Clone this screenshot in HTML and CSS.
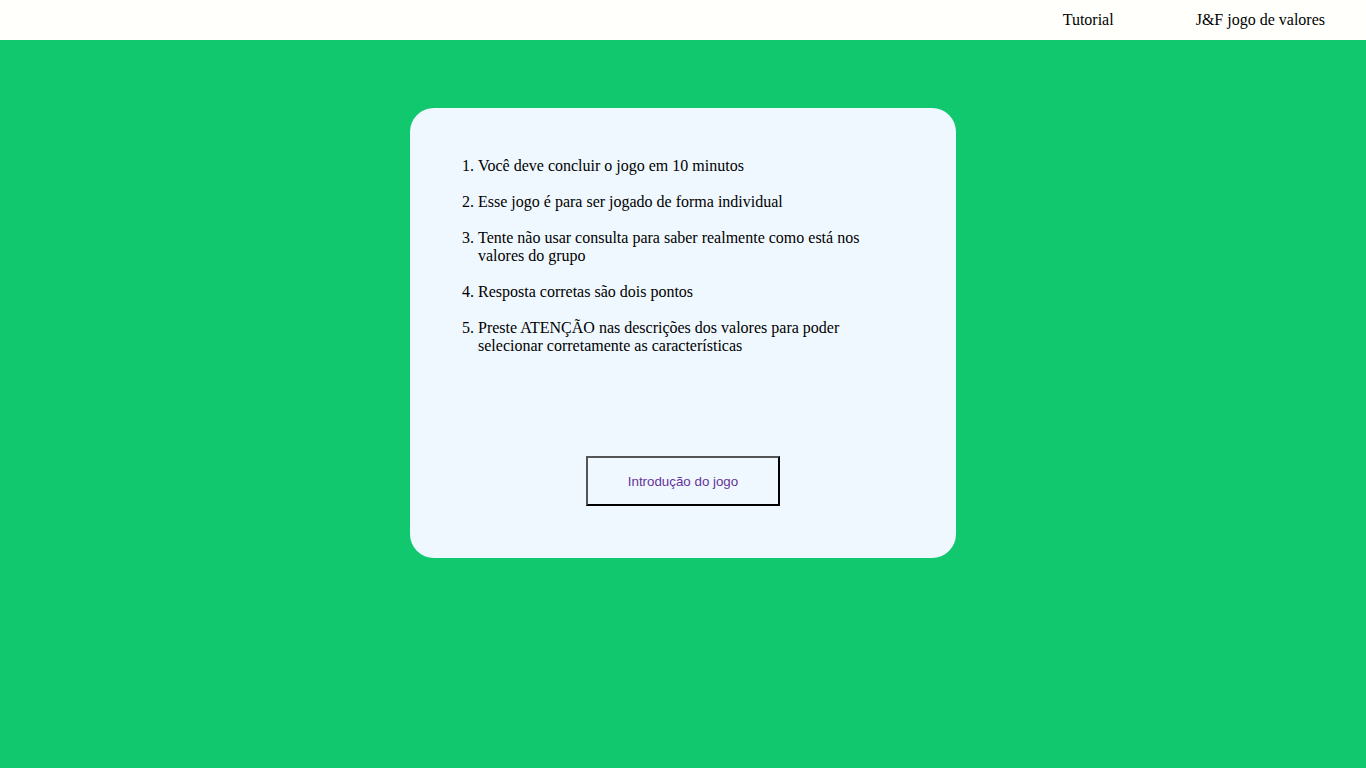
FILE: index.html
```html
<!DOCTYPE html>
<html lang="pt">
<head>
<meta charset="utf-8">
<title>J&amp;F jogo de valores</title>
<link rel="stylesheet" href="styles.css">
</head>
<body>
<header class="topbar">
  <nav class="nav">
    <a class="nav-link" href="#">Tutorial</a>
    <a class="nav-link" href="#">J&amp;F jogo de valores</a>
  </nav>
</header>
<main class="main">
  <section class="card">
    <ol class="rules">
      <li>Você deve concluir o jogo em 10 minutos</li>
      <li>Esse jogo é para ser jogado de forma individual</li>
      <li>Tente não usar consulta para saber realmente como está nos valores do grupo</li>
      <li>Resposta corretas são dois pontos</li>
      <li>Preste ATENÇÃO nas descrições dos valores para poder selecionar corretamente as características</li>
    </ol>
    <div class="actions">
      <button class="btn" type="button">Introdução do jogo</button>
    </div>
  </section>
</main>
</body>
</html>
```

FILE: styles.css
```css
html, body {
  margin: 0;
  padding: 0;
}
body {
  background: #12c86f;
  min-height: 768px;
  font-family: "Liberation Serif", "Times New Roman", serif;
  font-size: 16px;
  color: #000;
}
.topbar {
  background: #fffffb;
  height: 40px;
  display: flex;
  justify-content: flex-end;
  align-items: center;
}
.nav {
  display: flex;
  gap: 82px;
  padding-right: 41px;
}
.nav-link {
  color: #000;
  text-decoration: none;
  line-height: 40px;
}
.main {
  display: flex;
  justify-content: center;
  padding-top: 68px;
}
.card {
  width: 546px;
  height: 450px;
  box-sizing: border-box;
  background: #f0f8ff;
  border-radius: 24px;
  padding: 33px 28px 52px;
  display: flex;
  flex-direction: column;
}
.rules {
  margin: 16px 0 0;
  padding: 0 40px;
  line-height: 18px;
}
.rules li {
  margin-bottom: 18px;
}
.rules li:last-child {
  margin-bottom: 0;
}
.actions {
  margin-top: auto;
  display: flex;
  justify-content: center;
}
.btn {
  width: 194px;
  height: 50px;
  box-sizing: border-box;
  background: transparent;
  border-style: solid;
  border-width: 2px;
  border-color: #555 #000 #000 #555;
  font-family: "Liberation Sans", Arial, sans-serif;
  font-size: 13.333px;
  color: #663399;
  padding: 0;
  cursor: pointer;
}
```
